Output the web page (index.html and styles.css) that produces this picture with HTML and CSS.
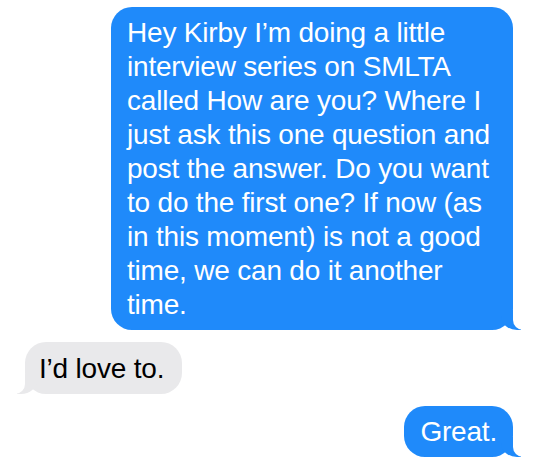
FILE: index.html
```html
<!DOCTYPE html>
<html lang="en">
<head>
<meta charset="utf-8">
<title>Messages</title>
<link rel="stylesheet" href="styles.css">
</head>
<body>
<main class="thread">
  <p class="bubble sent wide">Hey Kirby I’m doing a little<br>interview series on SMLTA<br>called How are you? Where I<br>just ask this one question and<br>post the answer. Do you want<br>to do the first one? If now (as<br>in this moment) is not a good<br>time, we can do it another<br>time.</p>
  <p class="bubble received">I’d love to.</p>
  <p class="bubble sent">Great.</p>
</main>
</body>
</html>
```
FILE: styles.css
```css
html, body {
  margin: 0;
  padding: 0;
  background: #ffffff;
}

.thread {
  display: flex;
  flex-direction: column;
  gap: 12px;
  padding: 7px 27px 11px 25px;
  font-family: "Liberation Sans", Arial, sans-serif;
  font-size: 28px;
  line-height: 34px;
  letter-spacing: -0.2px;
}

.bubble {
  position: relative;
  margin: 0;
  padding: 9px 16px 8px 16px;
  border-radius: 21px;
  white-space: nowrap;
}

.sent {
  align-self: flex-end;
  background: #1f8afa;
  color: #ffffff;
}

.wide {
  width: 402px;
  box-sizing: border-box;
}

.received {
  align-self: flex-start;
  background: #e9e9eb;
  color: #000000;
  padding: 10px 18px 8px 14px;
}

.sent::before,
.sent::after,
.received::before,
.received::after {
  content: "";
  position: absolute;
  bottom: 0;
}

.sent::before {
  right: -8px;
  width: 20px;
  height: 20px;
  background: #1f8afa;
  border-bottom-left-radius: 16px 14px;
}

.sent::after {
  right: -10px;
  width: 10px;
  height: 20px;
  background: #ffffff;
  border-bottom-left-radius: 10px;
}

.received::before {
  left: -8px;
  width: 20px;
  height: 20px;
  background: #e9e9eb;
  border-bottom-right-radius: 16px 14px;
}

.received::after {
  left: -10px;
  width: 10px;
  height: 20px;
  background: #ffffff;
  border-bottom-right-radius: 10px;
}
```
